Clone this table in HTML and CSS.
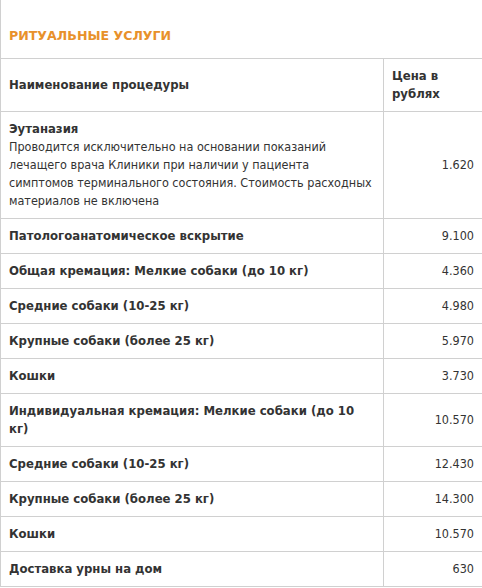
FILE: index.html
```html
<!DOCTYPE html>
<html lang="ru">
<head>
<meta charset="utf-8">
<link rel="stylesheet" href="styles.css">
</head>
<body>
<div class="frame">
  <div class="box">
    <h2 class="title">РИТУАЛЬНЫЕ УСЛУГИ</h2>
    <table class="prices">
      <colgroup><col class="c-name"><col class="c-price"></colgroup>
      <thead>
        <tr><th>Наименование процедуры</th><th class="hp">Цена в рублях</th></tr>
      </thead>
      <tbody>
        <tr><td><b>Эутаназия</b><span class="desc">Проводится исключительно на основании показаний лечащего врача Клиники при наличии у пациента симптомов терминального состояния. Стоимость расходных материалов не включена</span></td><td class="p">1.620</td></tr>
        <tr><td><b>Патологоанатомическое вскрытие</b></td><td class="p">9.100</td></tr>
        <tr><td><b>Общая кремация: Мелкие собаки (до 10 кг)</b></td><td class="p">4.360</td></tr>
        <tr><td><b>Средние собаки (10-25 кг)</b></td><td class="p">4.980</td></tr>
        <tr><td><b>Крупные собаки (более 25 кг)</b></td><td class="p">5.970</td></tr>
        <tr><td><b>Кошки</b></td><td class="p">3.730</td></tr>
        <tr><td><b>Индивидуальная кремация: Мелкие собаки (до 10 кг)</b></td><td class="p">10.570</td></tr>
        <tr><td><b>Средние собаки (10-25 кг)</b></td><td class="p">12.430</td></tr>
        <tr><td><b>Крупные собаки (более 25 кг)</b></td><td class="p">14.300</td></tr>
        <tr><td><b>Кошки</b></td><td class="p">10.570</td></tr>
        <tr><td><b>Доставка урны на дом</b></td><td class="p">630</td></tr>
      </tbody>
    </table>
  </div>
</div>
</body>
</html>
```
FILE: styles.css
```css
html, body { margin: 0; padding: 0; background: #fff; }
body {
  font-family: "DejaVu Sans", Verdana, sans-serif;
  font-size: 12.5px;
  line-height: 18px;
  color: #333;
  font-stretch: condensed;
}
.frame { width: 482px; overflow: hidden; }
.box {
  width: 484px;
  border-left: 1px solid #d0d0d0;
  box-sizing: border-box;
}
.title {
  margin: 0;
  padding: 27px 8px 13px;
  font-size: 12.6px;
  line-height: 18px;
  font-weight: bold;
  font-stretch: normal;
  color: #e8912b;
}
.prices {
  width: 483px;
  border-collapse: collapse;
  table-layout: fixed;
  margin-left: -1px;
}
.c-name { width: 383px; }
.prices th, .prices td {
  border: 1px solid #d0d0d0;
  padding: 8px;
  text-align: left;
  vertical-align: middle;
  font-weight: normal;
}
.prices th, .prices b {
  font-weight: bold;
  font-size: 13px;
  font-stretch: condensed;
}
.prices b { display: block; }
.desc { display: block; margin-right: 2px; }
.prices td.p { text-align: right; }
```
